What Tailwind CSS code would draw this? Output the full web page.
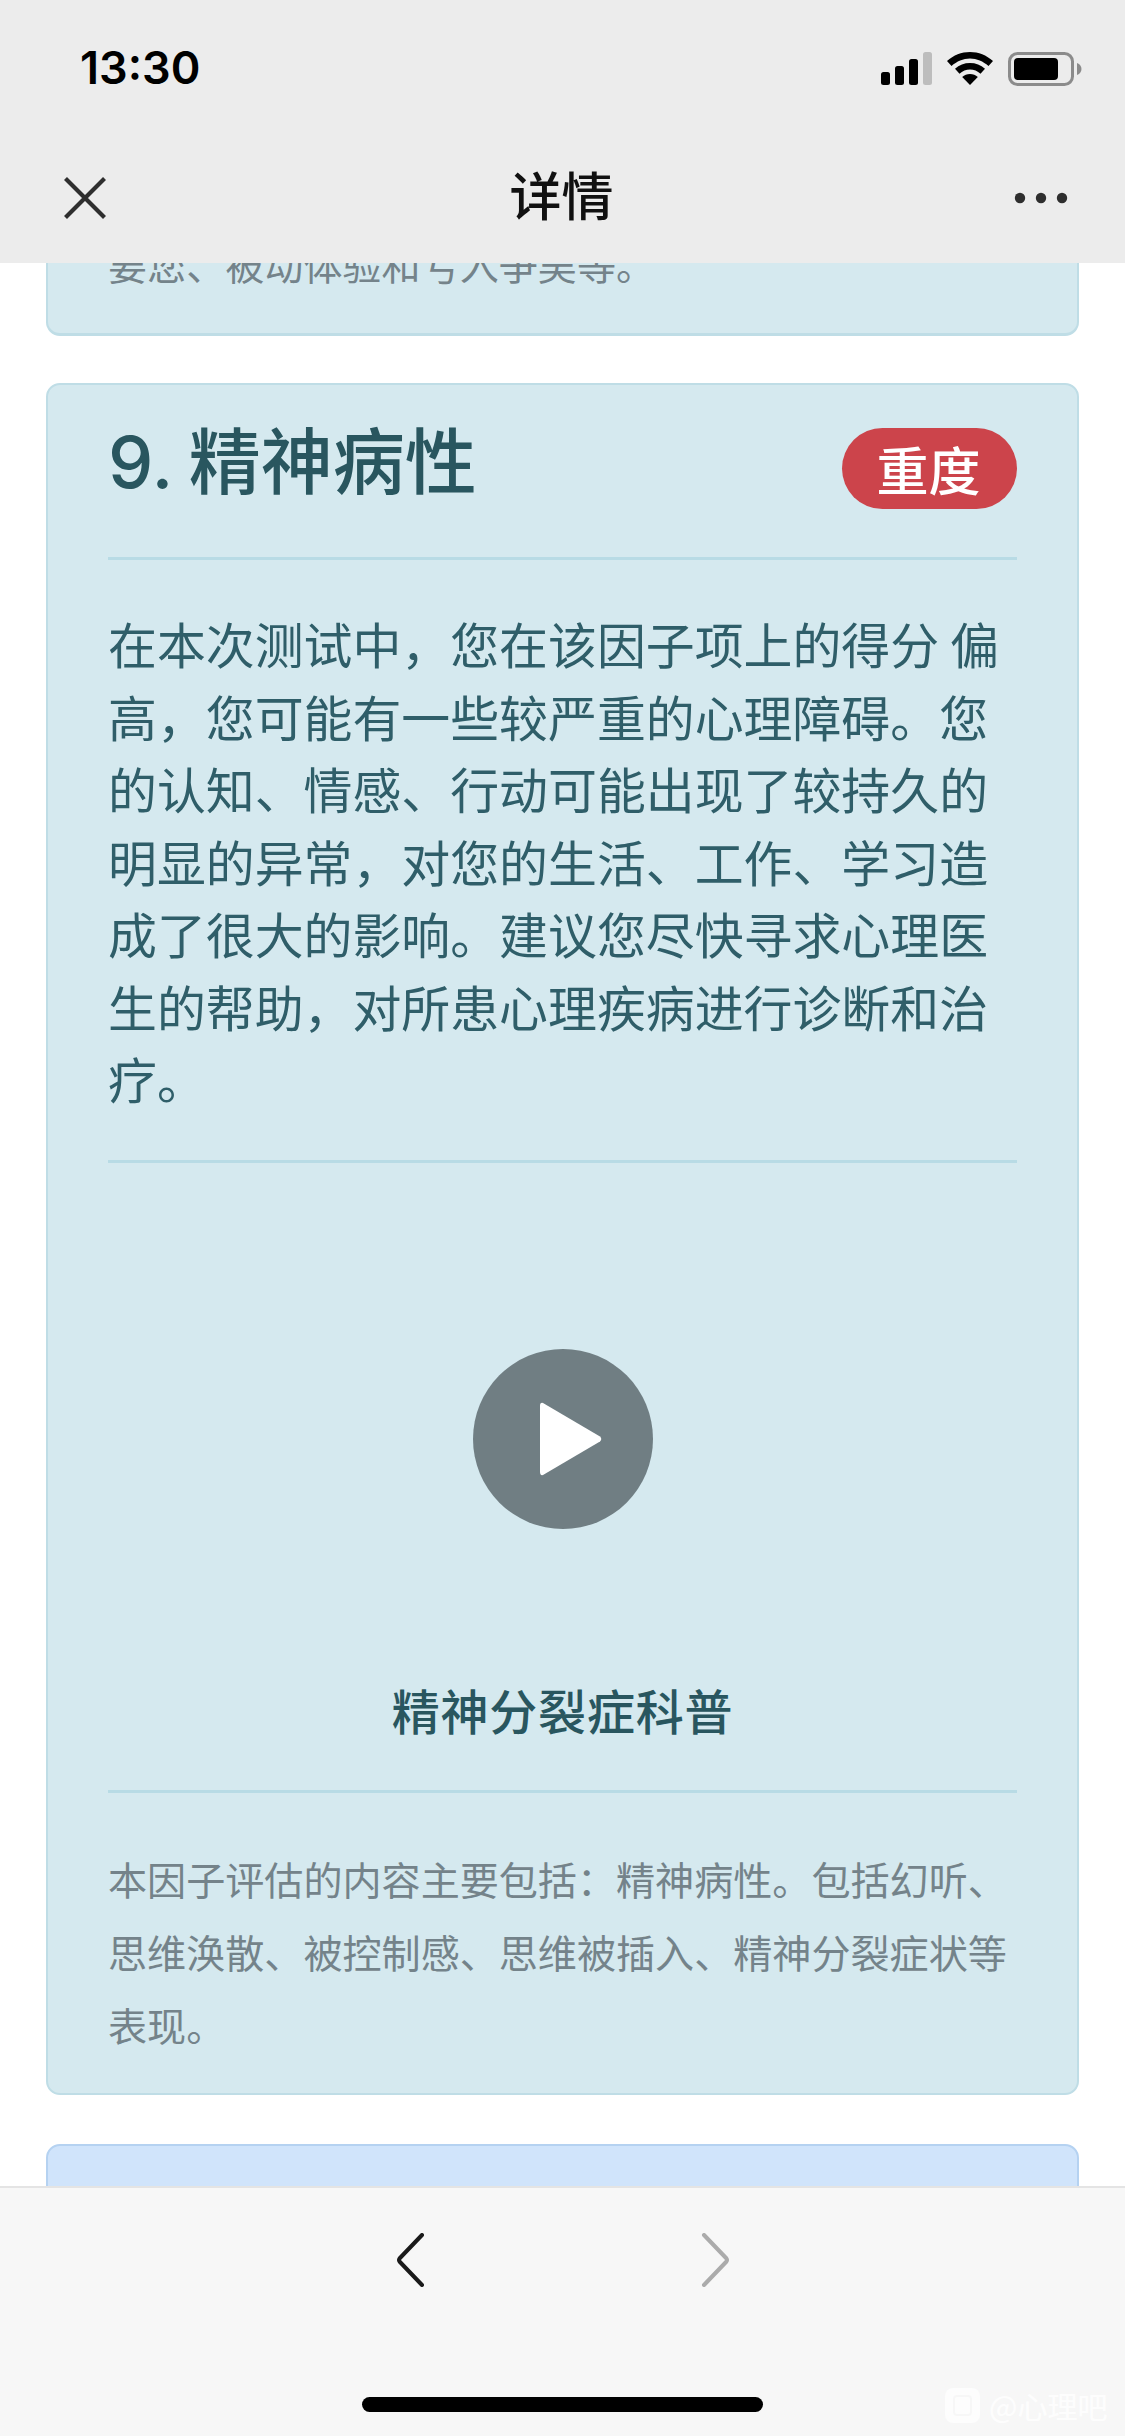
<!DOCTYPE html>
<html lang="zh-CN">
<head>
<meta charset="utf-8">
<script src="https://cdn.jsdelivr.net/npm/@tailwindcss/browser@4"></script>
</head>
<body class="bg-white">
<div class="w-[1125px] h-[2436px] flex flex-col overflow-hidden relative bg-white font-['Noto_Sans_CJK_SC','Noto_Sans',sans-serif]">
  <header class="h-[263px] shrink-0 bg-[#ececec] relative z-10 flex flex-col">
    <div class="h-[133px] shrink-0 flex items-start justify-between pl-[80px] pr-[43px] pt-[39px]">
      <span class="font-['Inter',sans-serif] text-[45px] leading-[58px] font-semibold text-black">13:30</span>
      <div class="flex items-start gap-[15px] pt-[13px]">
        <svg width="51" height="33" viewBox="0 0 51 33"><rect x="0" y="20" width="9" height="13" rx="2.5" fill="#000"/><rect x="14" y="14" width="9" height="19" rx="2.5" fill="#000"/><rect x="28" y="7" width="9" height="26" rx="2.5" fill="#000"/><rect x="42" y="0" width="9" height="33" rx="2.5" fill="#bdbdbd"/></svg>
        <svg width="46" height="33" viewBox="0 0 46 33"><path d="M23 0C14.500 0 6.500 3.200 0 9l4.500 5C9.800 9.400 16.200 6.500 23 6.500S36.200 9.400 41.500 14L46 9C39.500 3.200 31.500 0 23 0Z" fill="#000"/><path d="M23 11c-5.700 0-10.800 2-15 5.700l4.500 5C15.500 19 19.100 17.500 23 17.500s7.500 1.500 10.500 4.200l4.500-5C33.800 13 28.700 11 23 11Z" fill="#000"/><path d="M23 22c-3 0-5.700 1-7.800 3L23 33l7.800-8c-2.100-2-4.800-3-7.800-3Z" fill="#000"/></svg>
        <svg width="74" height="34" viewBox="0 0 74 34"><rect x="1.500" y="1.500" width="63" height="31" rx="8" fill="none" stroke="#8b8b8b" stroke-width="3"/><rect x="6" y="6" width="44" height="22" rx="4" fill="#000"/><path d="M69 11c3 1 4.500 3.500 4.500 6s-1.500 5-4.500 6Z" fill="#8b8b8b"/></svg>
      </div>
    </div>
    <div class="flex-1 relative flex items-center justify-center pb-[8px] pr-[2px]">
      <svg class="absolute left-[62px] top-[42px]" width="46" height="46" viewBox="0 0 46 46"><path d="M3.500 3.500 42.500 42.500M42.500 3.500 3.500 42.500" stroke="#2e2e2e" stroke-width="4.200" fill="none"/></svg>
      <span class="text-[52px] leading-[60px] font-medium text-[#111]">详情</span>
      <svg class="absolute left-[1014px] top-[59px]" width="54" height="12" viewBox="0 0 54 12"><circle cx="6" cy="6" r="5.200" fill="#2e2e2e"/><circle cx="27" cy="6" r="5.200" fill="#2e2e2e"/><circle cx="48" cy="6" r="5.200" fill="#2e2e2e"/></svg>
    </div>
  </header>

  <main class="flex-1 min-h-0 overflow-hidden px-[46px] flex flex-col gap-[47px]">
    <section class="shrink-0 h-[73px] rounded-b-[14px] bg-[#d5e9ef] border-x-[2px] border-b-[3px] border-[#bfdde6] px-[60px] overflow-hidden">
      <p class="text-[39.100px] leading-[73px] text-[#74838a] -mt-[36px]">要您、被动体验和亏入争吴等。</p>
    </section>

    <section class="shrink-0 h-[1712px] rounded-[14px] bg-[#d5e9ef] border-[2px] border-[#bfdde6] px-[60px] flex flex-col">
      <div class="h-[175px] shrink-0 flex items-start justify-between border-b-[3px] border-[#b8dbe5]">
        <h2 class="font-['Inter','Noto_Sans_CJK_SC',sans-serif] text-[72px] leading-[96px] pt-[29px] font-medium text-[#29565f] whitespace-nowrap h-[128px] [word-spacing:-3px]">9. 精神病性</h2>
        <span class="mt-[43px] w-[175px] h-[81px] rounded-full bg-[#cc444b] text-white text-[52px] leading-[81px] font-medium text-center pr-[2px]">重度</span>
      </div>
      <p class="h-[603px] shrink-0 border-b-[3px] border-[#b8dbe5] pt-[47px] text-[48.900px] leading-[72.500px] text-[#2f5e69]">在本次测试中，您在该因子项上的得分 偏高，您可能有一些较严重的心理障碍。您的认知、情感、行动可能出现了较持久的明显的异常，对您的生活、工作、学习造成了很大的影响。建议您尽快寻求心理医生的帮助，对所患心理疾病进行诊断和治疗。</p>
      <div class="h-[630px] shrink-0 border-b-[3px] border-[#b8dbe5] flex flex-col items-center">
        <div class="mt-[186px] w-[180px] h-[180px] rounded-full bg-[#707e83] flex items-center justify-center">
          <svg class="ml-[17px]" width="62" height="74" viewBox="0 0 62 74"><path d="M3 1 60 34.500Q62.500 37 60 39.500L3 73Q0 73.800 0 70V4Q0 .2 3 1Z" fill="#fff"/></svg>
        </div>
        <h3 class="mt-[147px] text-[48px] leading-[66px] font-medium tracking-[0.8px] text-[#29565f]">精神分裂症科普</h3>
      </div>
      <p class="pt-[49px] text-[39.100px] leading-[73px] text-[#74838a]">本因子评估的内容主要包括：精神病性。包括幻听、思维涣散、被控制感、思维被插入、精神分裂症状等表现。</p>
    </section>

    <section class="shrink-0 mt-[2px] h-[80px] rounded-t-[14px] bg-[#d0e4fb] border-[2px] border-[#b5d2f1]"></section>
  </main>

  <footer class="absolute left-0 top-[2186px] w-full h-[250px] bg-[#f7f7f7] border-t-[2px] border-[#e4e4e4] z-10">
    <svg class="absolute left-[396px] top-[45px]" width="30" height="54" viewBox="0 0 30 54"><path d="M26 2 3.500 25.500Q2.500 27 3.500 28.500L26 52" fill="none" stroke="#1a1a1a" stroke-width="4" stroke-linecap="round" stroke-linejoin="round"/></svg>
    <svg class="absolute left-[700px] top-[45px]" width="30" height="54" viewBox="0 0 30 54"><path d="M4 2 26.500 25.500Q27.500 27 26.500 28.500L4 52" fill="none" stroke="#ababab" stroke-width="4" stroke-linecap="round" stroke-linejoin="round"/></svg>
    <div class="absolute left-[362px] top-[209px] w-[401px] h-[15px] rounded-full bg-black"></div>
    <div class="absolute left-[945px] top-[199px] flex items-center gap-[9px] text-[30px] leading-[36px] text-white/80">
      <span class="w-[35px] h-[35px] rounded-[8px] bg-white/70 flex items-center justify-center"><span class="w-[19px] h-[21px] rounded-[4px] border-[2px] border-[#f7f7f7]"></span></span>
      <span class="whitespace-nowrap">@心理吧</span>
    </div>
  </footer>
</div>
</body>
</html>
